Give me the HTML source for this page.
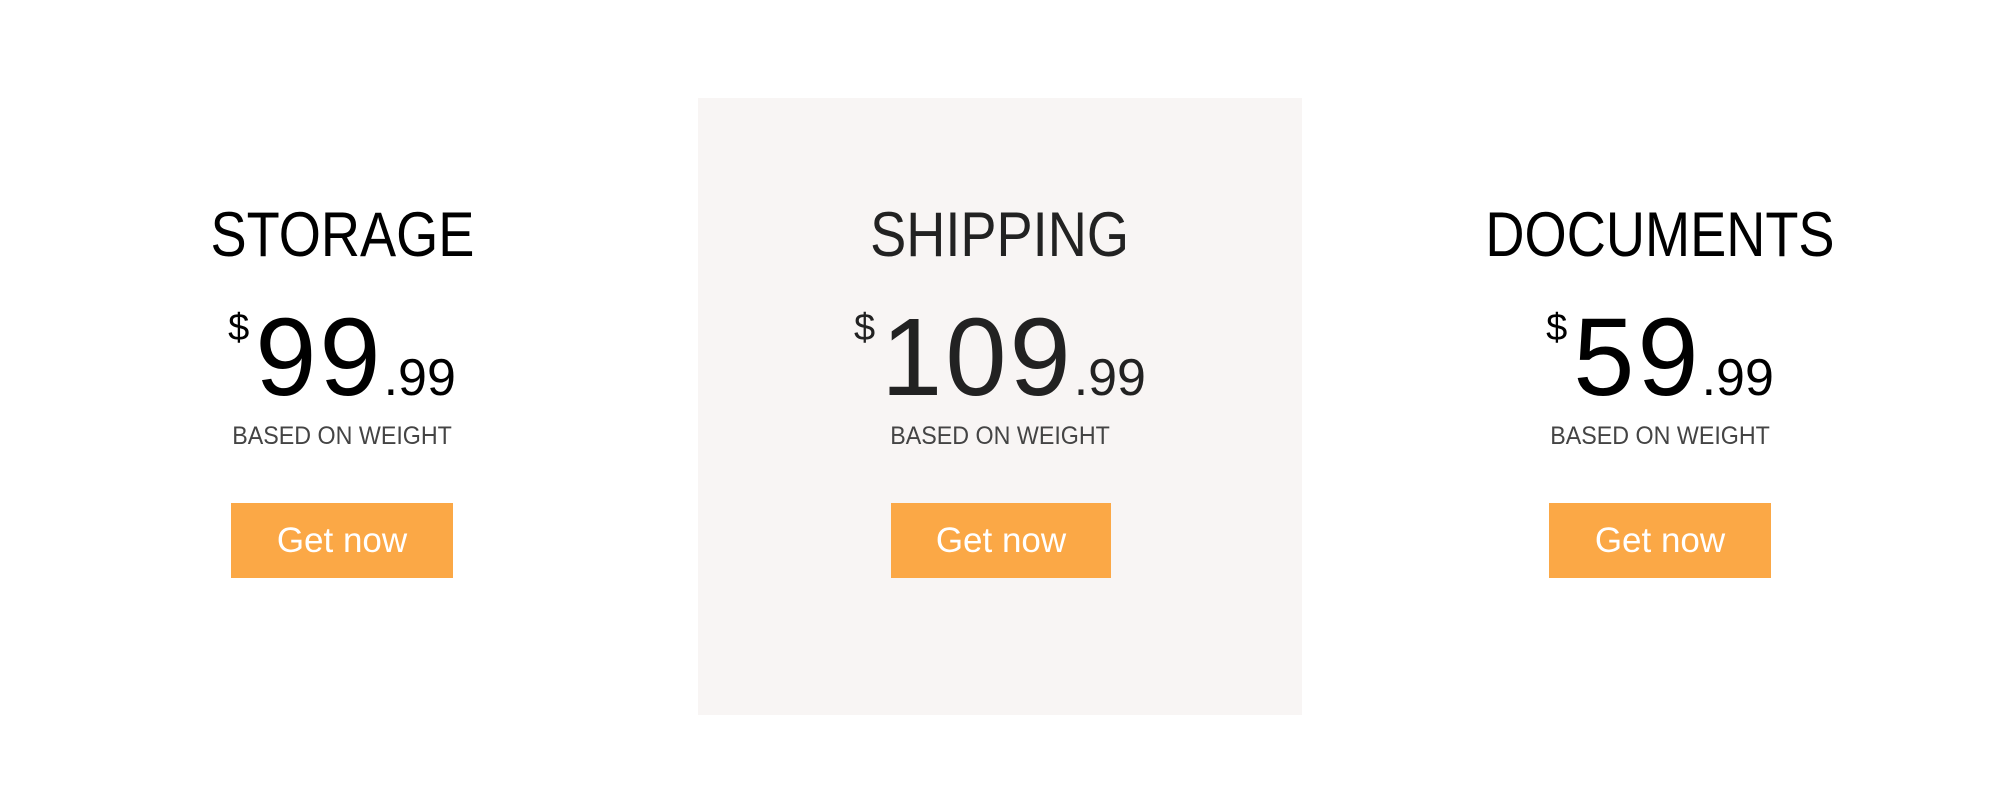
<!DOCTYPE html>
<html><head><meta charset="utf-8"><style>
html,body{margin:0;padding:0;width:2006px;height:812px;background:#fff;overflow:hidden;font-family:"Liberation Sans",sans-serif;}
.panel{position:absolute;left:698px;top:98px;width:604px;height:617px;background:#f8f5f4;}
.col{position:absolute;top:0;width:600px;height:812px;}
.t{position:absolute;left:0;width:600px;text-align:center;line-height:1;white-space:nowrap;}
.t span{display:inline-block;}
.title{top:204px;font-size:63px;}
.title span{transform:scaleX(0.86);}
.price{top:303px;}
.pr{display:inline-flex;align-items:baseline;line-height:1;}
.dol{font-size:38px;align-self:flex-start;margin-top:6px;margin-right:6px;}
.big{font-size:110px;letter-spacing:3px;}
.small{font-size:52px;}
.sub{top:424px;font-size:25px;color:#444;}
.sub span{transform:scaleX(0.93);}
.btn{position:absolute;top:503px;height:75px;width:222px;background:#fba846;color:#fff;font-size:35px;display:flex;align-items:center;justify-content:center;}
</style></head><body>
<div class="panel"></div>

<div class="col" style="left:42px;color:#000">
  <div class="t title"><span>STORAGE</span></div>
  <div class="t price"><div class="pr"><span class="dol">$</span><span class="big">99</span><span class="small">.99</span></div></div>
  <div class="t sub"><span>BASED ON WEIGHT</span></div>
  <div class="btn" style="left:189px">Get now</div>
</div>

<div class="col" style="left:700px;color:#222">
  <div class="t title"><span>SHIPPING</span></div>
  <div class="t price"><div class="pr"><span class="dol">$</span><span class="big">109</span><span class="small">.99</span></div></div>
  <div class="t sub"><span>BASED ON WEIGHT</span></div>
  <div class="btn" style="left:191px;width:220px">Get now</div>
</div>

<div class="col" style="left:1360px;color:#000">
  <div class="t title"><span>DOCUMENTS</span></div>
  <div class="t price"><div class="pr"><span class="dol">$</span><span class="big">59</span><span class="small">.99</span></div></div>
  <div class="t sub"><span>BASED ON WEIGHT</span></div>
  <div class="btn" style="left:189px">Get now</div>
</div>
</body></html>
